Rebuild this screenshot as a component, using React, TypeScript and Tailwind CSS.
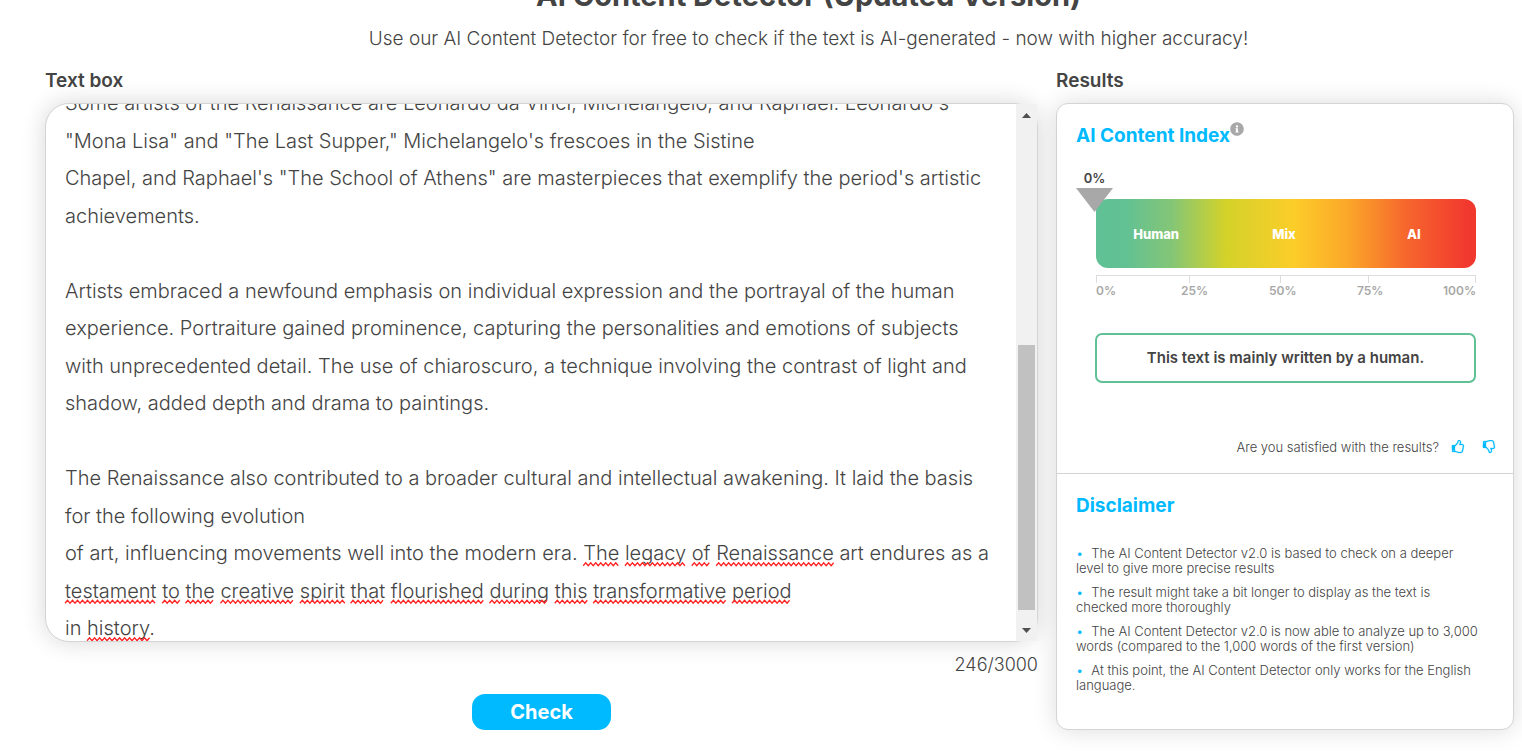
import { useLayoutEffect, useRef, useState } from "react";
import { FaInfoCircle } from "react-icons/fa";

const FONT_SIZE = 20;
const LINE_HEIGHT = FONT_SIZE * 1.875;
const PADDING_LEFT = 19;
const INITIAL_SCROLL = 19;

const lines = [
  "Some artists of the Renaissance are Leonardo da Vinci, Michelangelo, and Raphael. Leonardo's",
  "\"Mona Lisa\" and \"The Last Supper,\" Michelangelo's frescoes in the Sistine",
  "Chapel, and Raphael's \"The School of Athens\" are masterpieces that exemplify the period's artistic",
  "achievements.",
  "",
  "Artists embraced a newfound emphasis on individual expression and the portrayal of the human",
  "experience. Portraiture gained prominence, capturing the personalities and emotions of subjects",
  "with unprecedented detail. The use of chiaroscuro, a technique involving the contrast of light and",
  "shadow, added depth and drama to paintings.",
  "",
  "The Renaissance also contributed to a broader cultural and intellectual awakening. It laid the basis",
  "for the following evolution",
  "of art, influencing movements well into the modern era. The legacy of Renaissance art endures as a",
  "testament to the creative spirit that flourished during this transformative period",
  "in history.",
];

const flagged = [
  { line: 12, from: 56, to: 81 },
  { line: 13, from: 0, to: 82 },
  { line: 14, from: 3, to: 10 },
];

const disclaimers = [
  "The AI Content Detector v2.0 is based to check on a deeper level to give more precise results",
  "The result might take a bit longer to display as the text is checked more thoroughly",
  "The AI Content Detector v2.0 is now able to analyze up to 3,000 words (compared to the 1,000 words of the first version)",
  "At this point, the AI Content Detector only works for the English language.",
];

type Mark = { x: number; y: number; width: number };

function measureMarks(source: string[]): Mark[] {
  const ctx = document.createElement("canvas").getContext("2d");
  if (!ctx) return [];
  ctx.font = `300 ${FONT_SIZE}px Inter, sans-serif`;
  const marks: Mark[] = [];
  for (const { line, from, to } of flagged) {
    const text = source[line] ?? "";
    for (const match of text.slice(from, to).matchAll(/\S+/g)) {
      const start = from + (match.index ?? 0);
      marks.push({
        x: PADDING_LEFT + ctx.measureText(text.slice(0, start)).width,
        y: line * LINE_HEIGHT + LINE_HEIGHT / 2 + 8,
        width: ctx.measureText(match[0]).width,
      });
    }
  }
  return marks;
}

function wave({ x, y, width }: Mark) {
  let d = `M${x} ${y + 4}`;
  for (let i = 1; i * 2.5 <= width; i++) d += ` L${x + i * 2.5} ${y + (i % 2 ? 1 : 4)}`;
  return d;
}

function Thumb({ down = false }: { down?: boolean }) {
  return (
    <svg width="14" height="14" viewBox="0 0 1792 1792" fill="currentColor" stroke="currentColor" strokeWidth="40" aria-hidden="true">
      <g transform={down ? "matrix(1 0 0 -1 0 1664)" : undefined}>
        <path d="M128 720h230v360H128z" />
        <path d="M384 1344q0-26-19-45t-45-19-45 19-19 45 19 45 45 19 45-19 19-45zm1152-576q0-51-39-89.500t-89-38.500h-352q0-58 48-159.500t48-160.500q0-98-32-145t-128-47q-26 26-38 85t-30.500 125.500-59.500 109.500q-22 23-77 91-4 5-23 30t-31.500 41-34.500 42.500-40 44-38.500 35.500-40 27-35.500 9h-32v640h32q13 0 31.500 3t33 6.500 38 11 35 11.500 35.500 12.500 29 10.500q211 73 342 73h121q192 0 192-167 0-26-5-56 30-16 47.500-52.500t17.500-73.500-18-69q53-50 53-119 0-25-10-55.500t-25-47.500q32-1 53.500-47t21.500-81zm128-1q0 89-49 163 9 33 9 69 0 77-38 144 3 21 3 43 0 101-60 178 1 139-85 219.500t-227 80.500h-129q-96 0-189.500-22.500t-216.500-65.500q-116-40-138-40h-288q-53 0-90.500-37.500t-37.500-90.500v-640q0-53 37.500-90.500t90.500-37.500h274q36-24 137-155 58-75 107-128 24-25 35.500-85.500t30.500-126.500 62-108q39-37 90-37 84 0 151 32.500t102 101.500 35 186q0 93-48 192h176q104 0 180 76t76 179z" />
      </g>
    </svg>
  );
}

function Editor() {
  const area = useRef<HTMLTextAreaElement>(null);
  const [text, setText] = useState(lines.join("\n"));
  const [scroll, setScroll] = useState(INITIAL_SCROLL);
  const [marks, setMarks] = useState<Mark[]>([]);

  useLayoutEffect(() => {
    if (area.current) area.current.scrollTop = INITIAL_SCROLL;
    setMarks(measureMarks(lines));
  }, []);

  return (
    <div className="relative flex h-[539px] rounded-[24px] border border-[#d4d4d4] bg-white shadow-[0_0_24px_rgba(0,0,0,0.16)]">
      <textarea
        id="content"
        ref={area}
        value={text}
        spellCheck={false}
        wrap="off"
        onChange={(e) => {
          setText(e.target.value);
          setMarks([]);
        }}
        onScroll={(e) => setScroll(e.currentTarget.scrollTop)}
        className="block h-full min-w-0 flex-1 resize-none overflow-hidden rounded-l-[23px] bg-transparent pl-[19px] text-[20px] leading-[1.875] font-light text-[#444] outline-none"
      />
      <svg className="pointer-events-none absolute inset-0 h-full w-full" aria-hidden="true">
        <g transform={`translate(0 ${-scroll})`} fill="none" stroke="#f22" strokeWidth="1.3">
          {marks.map((m) => (
            <path key={`${m.x}-${m.y}`} d={wave(m)} />
          ))}
        </g>
      </svg>
      <div className="flex w-[21px] flex-col items-center bg-[#f1f1f1]">
        <button type="button" aria-label="Scroll up" className="flex h-[22px] w-full items-center justify-center">
          <svg width="9" height="5" viewBox="0 0 9 5" fill="#505050"><path d="M4.5 0 9 5H0z" /></svg>
        </button>
        <div className="flex w-full flex-1 flex-col justify-end px-[2px] pb-[9px]">
          <div className="h-[265px] bg-[#c1c1c1]" />
        </div>
        <button type="button" aria-label="Scroll down" className="flex h-[22px] w-full items-center justify-center">
          <svg width="9" height="5" viewBox="0 0 9 5" fill="#505050"><path d="M0 0h9L4.5 5z" /></svg>
        </button>
      </div>
    </div>
  );
}

function Gauge() {
  return (
    <div className="mt-[20px]">
      <div className="flex w-[37px] flex-col items-center text-[13px] leading-[16px] font-semibold text-[#444]">
        <span>0%</span>
      </div>
      <div className="relative pt-[13px] pr-[18px] pl-[20px]">
        <div className="grid h-[69px] grid-cols-[120fr_135fr_124fr] items-center rounded-[12px] bg-[linear-gradient(90deg,#5fc195_0%,#62c193_8%,#84c676_20%,#d3d22a_34%,#fccd29_52%,#fba829_66%,#f6652d_82%,#f1382f_98%)] text-center text-[13px] leading-[16px] font-extrabold text-white">
          <span>Human</span>
          <span>Mix</span>
          <span>AI</span>
        </div>
        <svg className="absolute top-[2px] left-0" width="37" height="24" viewBox="0 0 37 24" fill="#a8a8a8">
          <path d="M0 0h37L18.500 24z" />
        </svg>
        <div className="mt-[7px] grid h-[8px] grid-cols-[93fr_91fr_89fr_107fr] border-t border-r border-[#ddd]">
          <div className="border-l border-[#ddd]" />
          <div className="border-l border-[#ddd]" />
          <div className="border-l border-[#ddd]" />
          <div className="border-l border-[#ddd]" />
        </div>
        <div className="grid grid-cols-[85fr_88fr_88fr_119fr] text-[12px] leading-[16px] font-semibold text-[#a8a8a8]">
          <span>0%</span>
          <span>25%</span>
          <span>50%</span>
          <span className="flex justify-between">
            <span>75%</span>
            <span>100%</span>
          </span>
        </div>
      </div>
    </div>
  );
}

export default function App() {
  return (
    <div className="overflow-hidden bg-white pb-6 font-['Inter',sans-serif] text-[#444]">
      <header className="-mt-[22px] pl-[95px] text-center">
        <h1 className="text-[29px] leading-[36px] font-bold">AI Content Detector (Updated Version)</h1>
        <p className="mt-[12px] text-[19px] leading-[26px] font-light">
          Use our AI Content Detector for free to check if the text is AI-generated - now with higher accuracy!
        </p>
      </header>
      <main className="mt-[17px] grid grid-cols-[993fr_458fr] items-start gap-[18px] pr-[8px] pl-[45px]">
        <section>
          <label htmlFor="content" className="mb-[10px] block text-[19px] leading-[24px] font-semibold">Text box</label>
          <Editor />
          <p className="mt-[11px] text-right text-[18px] leading-[24px] font-light">246/3000</p>
          <button type="button" className="mx-auto mt-[17px] block h-[36px] w-[139px] rounded-[13px] bg-[#00baff] text-[20px] leading-[24px] font-bold text-white">
            Check
          </button>
        </section>
        <section>
          <h2 className="mb-[10px] text-[19px] leading-[24px] font-semibold">Results</h2>
          <div className="rounded-[12px] border border-[#d4d4d4] bg-white shadow-[0_0_24px_rgba(0,0,0,0.14)]">
            <div className="border-b border-[#d4d4d4] px-[19px] pt-[18px] pb-[16px]">
              <h3 className="flex items-start text-[19px] leading-[28px] font-bold text-[#00baff]">
                AI Content Index
                <FaInfoCircle className="h-[14px] w-[14px] text-[#a8a8a8]" />
              </h3>
              <Gauge />
              <p className="mr-[18px] ml-[19px] mt-[34px] flex h-[50px] items-center justify-center rounded-[7px] border-2 border-[#5fc195] text-[15px] leading-[20px] font-semibold">
                This text is mainly written by a human.
              </p>
              <div className="-mr-[2px] mt-[54px] flex items-center justify-end text-[13px] leading-[20px] font-light">
                Are you satisfied with the results?
                <button type="button" aria-label="Satisfied" className="ml-[12px] text-[#00baff]">
                  <Thumb />
                </button>
                <button type="button" aria-label="Not satisfied" className="ml-[17px] text-[#00baff]">
                  <Thumb down />
                </button>
              </div>
            </div>
            <div className="px-[19px] pt-[20px] pb-[36px]">
              <h3 className="text-[19px] leading-[24px] font-bold text-[#00baff]">Disclaimer</h3>
              <ul className="mt-[28px] flex flex-col gap-[9px] pr-3 text-[13px] leading-[15px] font-light">
                {disclaimers.map((item) => (
                  <li key={item} className="before:mr-[8px] before:text-[#00baff] before:content-['•']">
                    {item}
                  </li>
                ))}
              </ul>
            </div>
          </div>
        </section>
      </main>
    </div>
  );
}
